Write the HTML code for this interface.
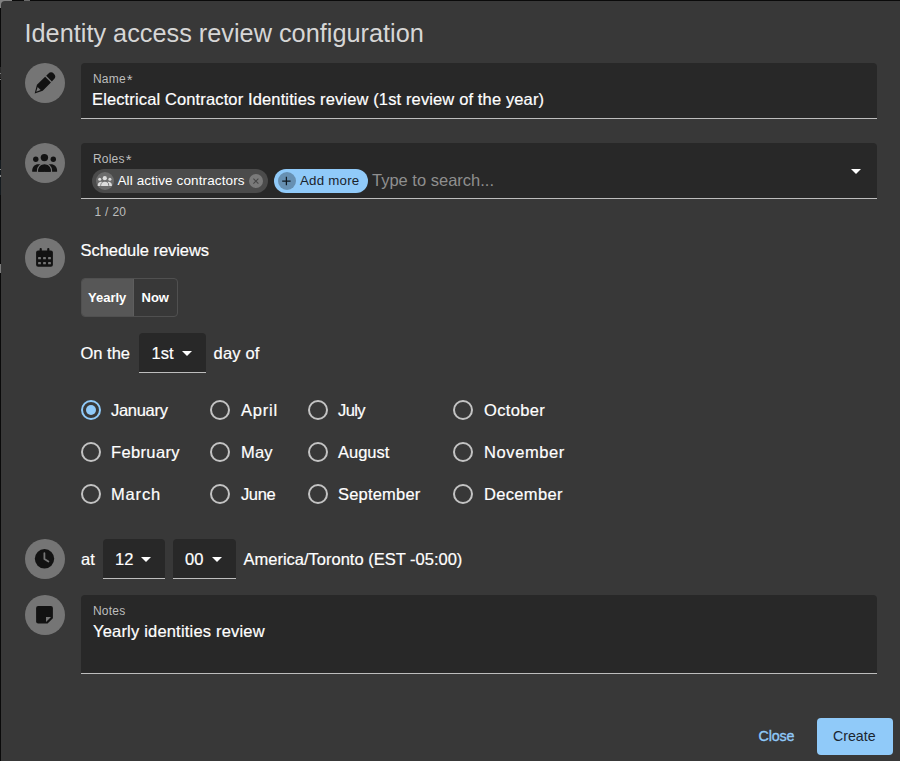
<!DOCTYPE html>
<html><head><meta charset="utf-8">
<style>
html,body{margin:0;padding:0;width:900px;height:761px;overflow:hidden;background:#0a0a0a;}
*{box-sizing:border-box;}
body{font-family:"Liberation Sans",sans-serif;color:#fff;position:relative;}
#dlg{position:absolute;left:1px;top:1px;width:905px;height:770px;background:#383838;border-radius:4px;}
.t{position:absolute;white-space:nowrap;}
.av{position:absolute;width:40px;height:40px;border-radius:50%;background:#757575;left:25px;}
.field{position:absolute;left:81px;width:796px;background:#282828;border-radius:4px 4px 0 0;border-bottom:1px solid #bdbdbd;}
.lbl{font-size:12px;line-height:14px;color:#bdbdbd;}
.val{font-size:16.5px;color:#fff;-webkit-text-stroke:0.2px #fff;}
.sel{position:absolute;background:#282828;border-radius:4px 4px 0 0;border-bottom:1px solid #bdbdbd;}
.arr{position:absolute;width:0;height:0;border-left:5px solid transparent;border-right:5px solid transparent;border-top:5px solid #fff;}
.radio{position:absolute;width:20px;height:20px;border-radius:50%;border:2px solid #c3c3c3;}
.radio.on{border-color:#90caf9;}
.radio.on::after{content:"";position:absolute;left:3px;top:3px;width:10px;height:10px;border-radius:50%;background:#90caf9;}
#ov{position:absolute;left:0;top:0;}
</style></head><body>
<div style="position:absolute;left:0;top:0;width:12px;height:8px;background:#808080;"></div>
<div style="position:absolute;left:24px;top:0;width:6px;height:1px;background:#6a6a6a;"></div>
<div style="position:absolute;left:0;top:67px;width:1px;height:11px;background:#2a2a2a;"></div>
<div style="position:absolute;left:0;top:73px;width:1px;height:1px;background:#7a7a7a;"></div>
<div style="position:absolute;left:0;top:79px;width:1px;height:1px;background:#7a7a7a;"></div>
<div style="position:absolute;left:0;top:160px;width:1px;height:35px;background:#141a1e;"></div>
<div style="position:absolute;left:0;top:169px;width:1px;height:1px;background:#888;"></div>
<div style="position:absolute;left:0;top:175px;width:1px;height:2px;background:#888;"></div>
<div style="position:absolute;left:0;top:264px;width:1px;height:9px;background:#7a7a7a;"></div>
<div id="dlg"></div>

<!-- title -->
<div class="t" style="left:24.5px;top:19px;font-size:25.3px;line-height:28px;color:#d6d6d6;">Identity access review configuration</div>

<!-- avatars -->
<div class="av" style="top:63px;"></div>
<div class="av" style="top:143px;"></div>
<div class="av" style="top:238px;"></div>
<div class="av" style="top:539px;"></div>
<div class="av" style="top:595px;"></div>

<!-- name field -->
<div class="field" style="top:63px;height:56px;"></div>
<div class="t lbl" style="left:93px;top:72px;letter-spacing:0.2px;">Name<span style="font-size:15px;line-height:10px;position:relative;top:2px;margin-left:1px;">*</span></div>
<div class="t val" style="left:92px;top:90px;letter-spacing:0.13px;">Electrical Contractor Identities review (1st review of the year)</div>

<!-- roles field -->
<div class="field" style="top:143px;height:56px;"></div>
<div class="t lbl" style="left:93px;top:152px;letter-spacing:0.2px;">Roles<span style="font-size:15px;line-height:10px;position:relative;top:2px;margin-left:1px;">*</span></div>
<div class="arr" style="left:851px;top:169px;"></div>
<!-- chip 1 -->
<div style="position:absolute;left:92px;top:169px;width:176px;height:24px;border-radius:12px;background:#4b4b4b;"></div>
<div style="position:absolute;left:96px;top:172px;width:18px;height:18px;border-radius:50%;background:#6c6c6c;"></div>
<div class="t" style="left:117.5px;top:173px;font-size:13.5px;letter-spacing:0.12px;color:#fff;">All active contractors</div>
<div style="position:absolute;left:249px;top:174px;width:14px;height:14px;border-radius:50%;background:#7a7a7a;"></div>
<!-- chip 2 -->
<div style="position:absolute;left:274px;top:169px;width:94px;height:24px;border-radius:12px;background:#90caf9;"></div>
<div style="position:absolute;left:278px;top:172px;width:18px;height:18px;border-radius:50%;background:#6790b2;"></div>
<div class="t" style="left:300px;top:173px;font-size:13.3px;letter-spacing:0.22px;color:#1a232c;">Add more</div>
<div class="t" style="left:372px;top:171px;font-size:16.5px;color:#8f8f8f;">Type to search...</div>
<div class="t lbl" style="left:94.5px;top:205px;letter-spacing:0.3px;">1 / 20</div>

<!-- schedule -->
<div class="t val" style="left:80.5px;top:241px;letter-spacing:-0.05px;">Schedule reviews</div>
<!-- toggle -->
<div style="position:absolute;left:81px;top:278px;width:97px;height:39px;border:1px solid #505050;border-radius:4px;overflow:hidden;">
  <div style="position:absolute;left:0;top:0;width:51px;height:37px;background:#575757;"></div>
  <div style="position:absolute;left:51px;top:0;width:1px;height:37px;background:#5e5e5e;"></div>
</div>
<div class="t" style="left:88px;top:290px;font-size:13px;font-weight:bold;color:#fff;">Yearly</div>
<div class="t" style="left:141.5px;top:290px;font-size:13px;font-weight:bold;color:#fff;">Now</div>

<!-- on the -->
<div class="t val" style="left:80.5px;top:343.5px;">On the</div>
<div class="sel" style="left:139px;top:333px;width:67px;height:40px;"></div>
<div class="t val" style="left:151.5px;top:343.5px;">1st</div>
<div class="arr" style="left:182px;top:351px;"></div>
<div class="t val" style="left:213.5px;top:343.5px;letter-spacing:0.2px;">day of</div>

<!-- months -->
<div class="radio on" style="left:81px;top:400px;"></div>
<div class="t val" style="left:111px;top:400.5px;letter-spacing:-0.3px;">January</div>
<div class="radio" style="left:81px;top:442px;"></div>
<div class="t val" style="left:111px;top:442.5px;letter-spacing:0.36px;">February</div>
<div class="radio" style="left:81px;top:484px;"></div>
<div class="t val" style="left:111px;top:484.5px;letter-spacing:0.85px;">March</div>

<div class="radio" style="left:210px;top:400px;"></div>
<div class="t val" style="left:241px;top:400.5px;letter-spacing:0.8px;">April</div>
<div class="radio" style="left:210px;top:442px;"></div>
<div class="t val" style="left:241px;top:442.5px;letter-spacing:0.2px;">May</div>
<div class="radio" style="left:210px;top:484px;"></div>
<div class="t val" style="left:241px;top:484.5px;letter-spacing:-0.4px;">June</div>

<div class="radio" style="left:308px;top:400px;"></div>
<div class="t val" style="left:338px;top:400.5px;letter-spacing:-0.6px;">July</div>
<div class="radio" style="left:308px;top:442px;"></div>
<div class="t val" style="left:338px;top:442.5px;letter-spacing:0px;">August</div>
<div class="radio" style="left:308px;top:484px;"></div>
<div class="t val" style="left:338px;top:484.5px;letter-spacing:0.2px;">September</div>

<div class="radio" style="left:453px;top:400px;"></div>
<div class="t val" style="left:484px;top:400.5px;letter-spacing:0.33px;">October</div>
<div class="radio" style="left:453px;top:442px;"></div>
<div class="t val" style="left:484px;top:442.5px;letter-spacing:0.6px;">November</div>
<div class="radio" style="left:453px;top:484px;"></div>
<div class="t val" style="left:484px;top:484.5px;letter-spacing:0.33px;">December</div>

<!-- time -->
<div class="t val" style="left:81px;top:549.5px;">at</div>
<div class="sel" style="left:103px;top:539px;width:62px;height:40px;"></div>
<div class="t val" style="left:115px;top:549.5px;">12</div>
<div class="arr" style="left:141px;top:557px;"></div>
<div class="sel" style="left:173px;top:539px;width:63px;height:40px;"></div>
<div class="t val" style="left:185px;top:549.5px;">00</div>
<div class="arr" style="left:212px;top:557px;"></div>
<div class="t val" style="left:243.5px;top:549.5px;">America/Toronto (EST -05:00)</div>

<!-- notes -->
<div class="field" style="top:595px;height:79px;"></div>
<div class="t lbl" style="left:93px;top:604px;letter-spacing:0.2px;">Notes</div>
<div class="t val" style="left:93px;top:621.5px;letter-spacing:0.19px;">Yearly identities review</div>

<!-- buttons -->
<div class="t" style="left:758.5px;top:727.5px;font-size:14.3px;letter-spacing:-0.15px;-webkit-text-stroke:0.35px #90caf9;color:#90caf9;">Close</div>
<div style="position:absolute;left:817px;top:718px;width:76px;height:37px;border-radius:4px;background:#90caf9;"></div>
<div class="t" style="left:833px;top:727.7px;font-size:14.2px;color:#1a2530;">Create</div>

<!-- icons overlay -->
<svg id="ov" width="900" height="761" viewBox="0 0 900 761">
  <!-- pencil -->
  <g transform="translate(44.5 83.1) rotate(-45)" fill="#121212">
    <path d="M6.4 -4 H9.3 A4 4 0 0 1 9.3 4 H6.4 Z"/>
    <path d="M5 -4.1 H-6.6 L-14.3 0.4 L-6.6 4.1 H5 Z M-7.6 -2.1 L-11.9 0.2 L-7.6 2.2 Z" fill-rule="evenodd"/>
  </g>
  <!-- groups -->
  <g fill="#121212">
    <circle cx="44.4" cy="157.6" r="3.7"/>
    <circle cx="35.8" cy="159.2" r="2.7"/>
    <circle cx="53.3" cy="159.2" r="2.7"/>
    <path d="M32.2 171.8 V170.5 C32.2 167 34.8 164.3 38.3 164.3 C41.8 164.3 44.4 167 44.4 170.5 V171.8 Z"/>
    <path d="M44.6 171.8 V170.5 C44.6 167 47.3 164.3 50.8 164.3 C54.4 164.3 57.1 167 57.1 170.5 V171.8 Z"/>
    <path d="M37.6 172.5 V170.6 C37.6 166.8 40.6 163.6 44.5 163.6 C48.4 163.6 51.4 166.8 51.4 170.6 V172.5" fill="none" stroke="#757575" stroke-width="1.4"/>
    <path d="M38.2 171.8 V170.6 C38.2 167.2 41 164.3 44.5 164.3 C48 164.3 50.8 167.2 50.8 170.6 V171.8 Z"/>
  </g>
  <!-- calendar -->
  <g fill="#121212">
    <rect x="36.1" y="250.6" width="16.8" height="16.2" rx="2"/>
    <rect x="39.6" y="248" width="2.2" height="4" rx="1"/>
    <rect x="47.2" y="248" width="2.2" height="4" rx="1"/>
    <g fill="#757575">
      <rect x="38.1" y="257" width="2.8" height="2.3" rx="0.5"/>
      <rect x="43.1" y="257" width="2.8" height="2.3" rx="0.5"/>
      <rect x="48.1" y="257" width="2.8" height="2.3" rx="0.5"/>
      <rect x="38.1" y="261.9" width="2.8" height="2.3" rx="0.5"/>
      <rect x="43.1" y="261.9" width="2.8" height="2.3" rx="0.5"/>
      <rect x="48.1" y="261.9" width="2.8" height="2.3" rx="0.5"/>
    </g>
  </g>
  <!-- clock -->
  <circle cx="44.5" cy="558.8" r="9.7" fill="#121212"/>
  <path d="M44.4 553.2 V559 L48.4 561.6" fill="none" stroke="#757575" stroke-width="1.8" stroke-linecap="round" stroke-linejoin="round"/>
  <!-- note -->
  <path d="M38.1 606.1 H50.9 A2 2 0 0 1 52.9 608.1 V618.2 L47.6 623.5 H38.1 A2 2 0 0 1 36.1 621.5 V608.1 A2 2 0 0 1 38.1 606.1 Z" fill="#121212"/>
  <path d="M46 617 H51 L46 622 Z" fill="#757575"/>
  <!-- chip groups icon -->
  <g fill="#dcdcdc">
    <circle cx="104.8" cy="178.2" r="2.1"/>
    <circle cx="99.7" cy="179.2" r="1.5"/>
    <circle cx="109.9" cy="179.2" r="1.5"/>
    <path d="M97.7 186 V185.2 C97.7 183.2 99.2 181.8 101.2 181.8 C103.2 181.8 104.7 183.2 104.7 185.2 V186 Z"/>
    <path d="M104.9 186 V185.2 C104.9 183.2 106.4 181.8 108.4 181.8 C110.4 181.8 111.9 183.2 111.9 185.2 V186 Z"/>
    <path d="M100.9 186.5 V185.2 C100.9 183 102.6 181.3 104.8 181.3 C107 181.3 108.7 183 108.7 185.2 V186.5" fill="none" stroke="#6c6c6c" stroke-width="1"/>
    <path d="M101.3 186 V185.2 C101.3 183.3 102.9 181.7 104.8 181.7 C106.7 181.7 108.3 183.3 108.3 185.2 V186 Z"/>
  </g>
  <!-- chip delete x -->
  <path d="M253.4 178.6 L258.4 183.6 M258.4 178.6 L253.4 183.6" stroke="#474747" stroke-width="1.1"/>
  <!-- add plus -->
  <path d="M282.2 181 H290.6 M286.4 176.8 V185.2" stroke="#0f1820" stroke-width="1.25"/>
</svg>
</body></html>
